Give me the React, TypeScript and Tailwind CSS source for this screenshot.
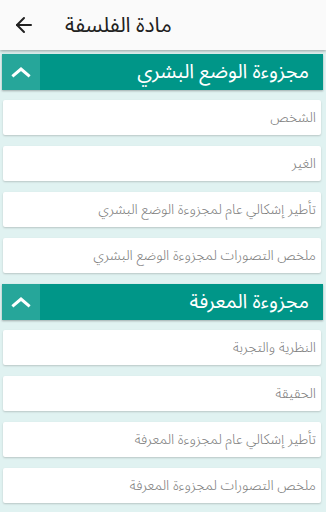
import { ArrowLeft } from "lucide-react";

const sections = [
  {
    title: "مجزوءة الوضع البشري",
    items: [
      "الشخص",
      "الغير",
      "تأطير إشكالي عام لمجزوءة الوضع البشري",
      "ملخص التصورات لمجزوءة الوضع البشري",
    ],
  },
  {
    title: "مجزوءة المعرفة",
    items: [
      "النظرية والتجربة",
      "الحقيقة",
      "تأطير إشكالي عام لمجزوءة المعرفة",
      "ملخص التصورات لمجزوءة المعرفة",
    ],
  },
];

const arabic = { fontFamily: '"Noto Sans Arabic", "DejaVu Sans", "Noto Sans", sans-serif' };

function SectionHeader({ title }: { title: string }) {
  return (
    <div className="ml-[2px] mr-[3px] flex h-9 items-stretch bg-[#009688] shadow-[0_1px_2px_rgba(0,0,0,0.3)]">
      <div className="flex w-[38px] items-center justify-center bg-[#26a69a]">
        <svg width="20" height="12" viewBox="0 0 20 12" fill="none">
          <path d="M2.5 9.5 L10 3 L17.5 9.5" stroke="#ffffff" strokeWidth="3" strokeLinecap="square" />
        </svg>
      </div>
      <div dir="rtl" className="flex flex-1 items-center pr-[14px] text-[20px] leading-none text-white" style={arabic}>
        {title}
      </div>
    </div>
  );
}

function ItemCard({ label }: { label: string }) {
  return (
    <div
      dir="rtl"
      className="ml-[3px] mr-[5px] flex h-[35px] items-center rounded-[2px] bg-white pr-[5px] text-[14px] font-light text-[#7a7a7a] shadow-[0_1px_2px_rgba(0,0,0,0.18)]"
      style={arabic}
    >
      {label}
    </div>
  );
}

export default function App() {
  return (
    <div className="h-[512px] w-[326px] overflow-hidden bg-[#e0f2f1]">
      <div className="flex h-[50px] items-center bg-[#fafafa] shadow-[0_1px_3px_rgba(0,0,0,0.35)]">
        <div className="ml-3 flex w-6 items-center justify-center text-[#212121]">
          <ArrowLeft size={24} strokeWidth={2} />
        </div>
        <div className="ml-[29px] text-[21px] leading-none text-[#212121]" style={arabic}>
          مادة الفلسفة
        </div>
      </div>
      <div className="flex flex-col pt-1">
        {sections.map((s, i) => (
          <div key={s.title} className={i > 0 ? "mt-[11px]" : ""}>
            <SectionHeader title={s.title} />
            <div className="mt-[10px] flex flex-col gap-[11px]">
              {s.items.map((it) => (
                <ItemCard key={it} label={it} />
              ))}
            </div>
          </div>
        ))}
      </div>
    </div>
  );
}
